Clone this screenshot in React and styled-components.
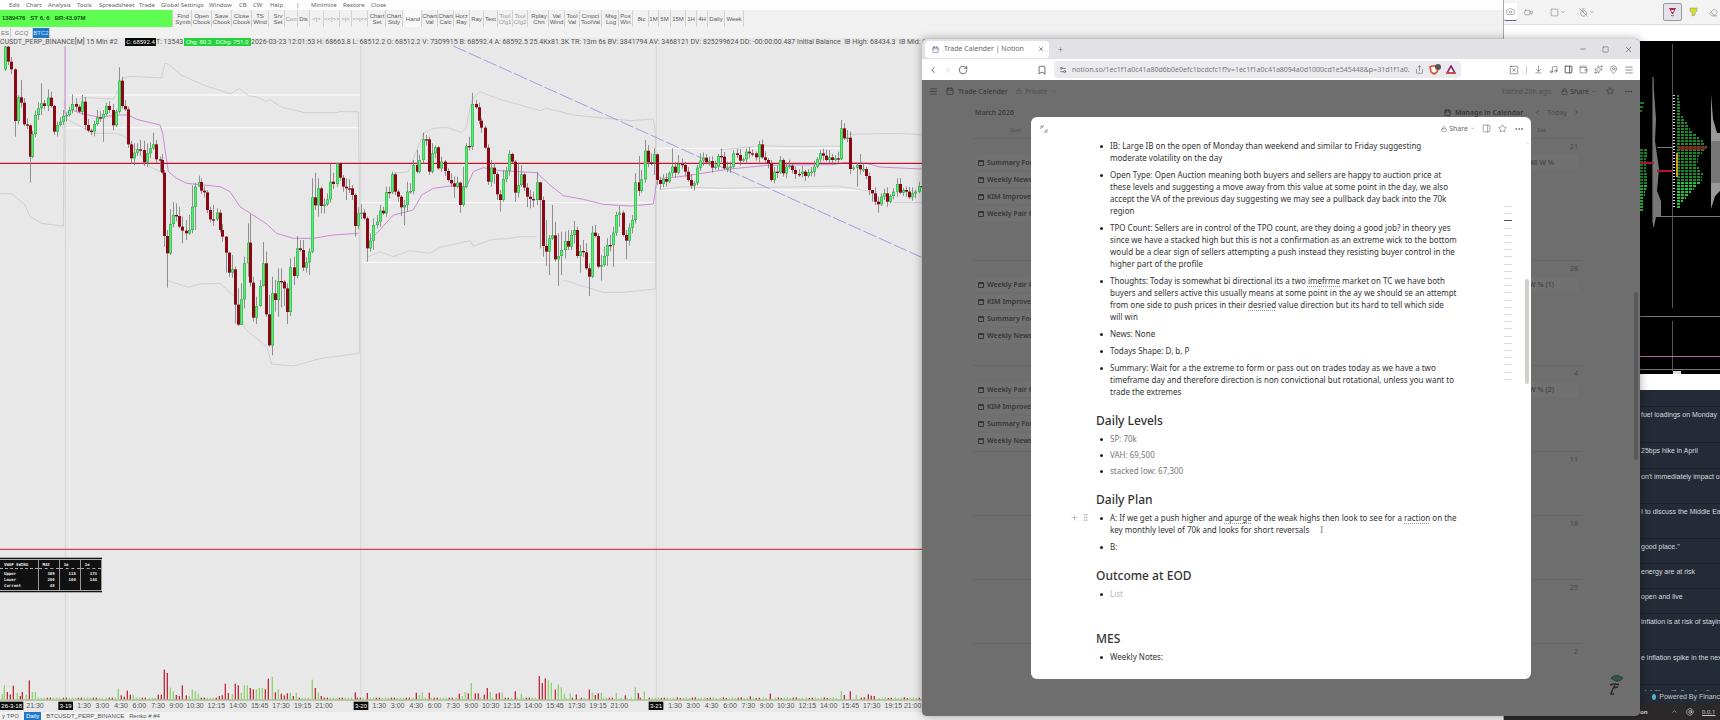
import React from "react";
import styled, { createGlobalStyle } from "styled-components";
import {
  ArrowDownToLine,
  Bookmark,
  Calendar,
  Camera,
  ChevronDown,
  ChevronLeft,
  ChevronRight,
  ChevronUp,
  Ellipsis,
  Eraser,
  Lock,
  Menu,
  Music,
  PanelRight,
  Plus,
  RotateCw,
  Settings2,
  Share,
  Sparkles,
  Square,
  SquareX,
  Star,
  TimerOff,
  Video,
  Wallet,
  X,
  Minus,
  MapPin,
  AtSign,
  GripVertical,
} from "lucide-react";

const GlobalStyle = createGlobalStyle`
* { box-sizing: border-box; }
body {
  margin: 0;
  overflow: hidden;
  background: #e8e8e8;
  font-family: "Noto Sans", sans-serif;
}
button { font: inherit; color: inherit; background: none; border: 0; padding: 0; margin: 0; }
a { color: inherit; text-decoration: none; }
`;

/* ---------- data ---------- */

const MENU = [
  ["Edit", 17], ["Chart", 22], ["Analysis", 29], ["Tools", 22], ["Spreadsheet", 40],
  ["Trade", 22], ["Global Settings", 48], ["Window", 30], ["CB", 14], ["CW", 17],
  ["Help", 26], ["|", 15], ["Minimize", 32], ["Restore", 28], ["Close", 30],
];

// label, width, extra space in front
const TOOLS = [
  ["Find Symb", 17, 2], ["Open Cbook", 20], ["Save Cbook", 20], ["Close Cbook", 20], ["TS Wind", 17],
  ["Srv Set", 13, 3], ["Con", 13], ["Dis", 12], ["<|>", 14], ["<<|>>", 16], [">|<", 12], [">>|<<", 16],
  ["Chart Set", 17, 1], ["Chart Stdy", 17], ["Hand", 17, 2], ["Chart Val", 16], ["Chart Calc", 16],
  ["Horz Ray", 16], ["Ray", 14], ["Text", 14], ["Tool Cfg1", 15], ["Tool Cfg2", 15],
  ["Rplay Chrt", 19, 2], ["Val Wind", 16], ["Tool Val", 15], ["Cmpct ToolVal", 22],
  ["Msg Log", 15, 2], ["Pos Win", 14], ["8tc", 14, 2], ["1M", 10], ["5M", 12], ["15M", 15],
  ["1H", 11], ["4H", 11], ["Daily", 17], ["Week", 19],
];

// x, close, high, low: every candle opens at the close before it
const CANDLES = [
  [7, 208], [16, 140], [25, 185], [34, 208], [44, 363, 205, 410], [53, 292], [62, 308, 240], [71, 373], [81, 376], [90, 470, 373, 548],
  [97, 402], [104, 345], [113, 325], [122, 310, 250, 345], [132, 318], [145, 293, 268], [154, 318], [163, 395, 315, 405], [172, 375], [181, 365],
  [190, 348], [199, 345], [208, 330], [217, 312, 283], [227, 320], [236, 335], [247, 305, 285], [254, 375], [263, 392], [272, 394],
  [281, 372], [290, 352, 330], [299, 355], [308, 342, 330, 425], [317, 318], [326, 330], [338, 376], [347, 335], [357, 242, 202, 340], [365, 318, 230, 325],
  [374, 328], [383, 433, 320], [392, 475], [401, 458, 430, 496], [410, 448], [420, 450, 420], [431, 487, 422, 498], [440, 460, 430, 500], [450, 445], [460, 433, 398],
  [467, 478, 420], [480, 480, 470, 515], [485, 518], [493, 708, 510, 740], [502, 760, 690, 863], [511, 672, 628, 765], [520, 645, 607], [529, 648, 610], [538, 680, 620], [547, 692, 650, 730],
  [557, 700, 660, 720], [566, 690, 645], [575, 620, 556, 700], [584, 560, 548, 690], [597, 546, 527, 560], [604, 572, 535], [612, 577, 560], [621, 630, 570, 640], [630, 658, 620], [640, 658, 615, 678],
  [652, 638, 625], [659, 690, 628, 698], [667, 710], [677, 758, 708, 818], [686, 818, 755, 830], [695, 808, 765], [704, 914, 800, 970], [713, 974, 865, 978], [722, 898, 850, 975], [733, 790, 770, 925],
  [743, 728, 670, 830], [750, 848, 643, 860], [760, 953, 830, 965], [769, 918, 890, 972], [779, 858, 840, 920], [790, 790, 726, 860], [798, 943, 755, 950], [808, 1036, 885, 1040], [816, 880, 830, 1066], [825, 900, 840, 935],
  [834, 843, 805, 950], [843, 845, 805, 922], [852, 865, 840, 918], [862, 936, 850, 972], [871, 802, 775, 948], [881, 828, 770, 855], [890, 745, 708, 835], [900, 750, 720], [909, 803, 720], [918, 787, 772],
  [927, 755, 745, 825], [936, 592, 535, 760], [945, 616, 518, 630], [955, 565, 535, 650], [963, 618, 560, 640], [972, 613, 595, 640], [982, 598, 580], [991, 545, 490], [1000, 552, 518], [1012, 490, 488, 560],
  [1021, 533, 488], [1030, 560, 525], [1038, 565, 535, 600], [1047, 565, 538], [1056, 585], [1065, 678, 580, 710], [1074, 640], [1084, 638, 613], [1093, 655], [1102, 745, 650, 785],
  [1111, 722, 700, 755], [1120, 675, 655, 750], [1130, 665, 645], [1139, 632, 615], [1148, 640, 620], [1158, 576, 560], [1167, 577, 560], [1177, 523, 515], [1185, 575, 518], [1194, 590],
  [1203, 622, 585, 648], [1212, 615, 600, 675], [1222, 575, 545, 635], [1231, 573, 550], [1240, 495, 480], [1250, 515, 450, 520], [1258, 480, 465], [1268, 418, 398, 490], [1277, 418, 405], [1286, 515, 410, 525],
  [1296, 460, 430, 520], [1305, 442], [1315, 505, 438], [1324, 485, 470], [1334, 513, 480], [1343, 540, 505], [1352, 550, 520], [1361, 560, 530, 593], [1370, 548], [1380, 615, 545, 638],
  [1389, 560, 500, 620], [1398, 438, 430, 565], [1407, 440, 410], [1417, 312, 278, 450], [1427, 322, 300], [1436, 362], [1444, 383, 355], [1454, 443], [1463, 545], [1472, 503, 480, 560],
  [1481, 522, 490, 552], [1490, 583, 515, 600], [1499, 600, 570, 635], [1508, 537, 510, 605], [1517, 512, 500], [1527, 462, 450], [1536, 485, 458], [1545, 578, 480, 605], [1554, 555, 490], [1564, 523, 495],
  [1573, 563, 520], [1582, 590, 550, 622], [1591, 597, 570, 625], [1600, 600, 575, 622], [1611, 547, 515], [1620, 600, 545, 745], [1629, 738, 590, 770], [1638, 755, 660, 798], [1647, 715, 705, 825], [1656, 706, 615, 720],
  [1665, 778, 665, 785], [1675, 768, 700, 858], [1684, 750, 695, 825], [1695, 723, 695, 775], [1704, 740, 690, 750], [1713, 705, 690], [1722, 690, 663, 730], [1731, 768, 680, 775], [1740, 753, 735, 818], [1749, 757, 720],
  [1757, 805, 730], [1766, 830, 790, 888], [1776, 698, 678, 835], [1786, 708, 675], [1795, 800, 700, 805], [1804, 795, 765, 842], [1813, 768, 740], [1822, 735, 715, 798], [1831, 735, 705], [1840, 698, 680, 800],
  [1849, 645, 635], [1858, 638, 618, 680], [1868, 705, 632], [1877, 722, 690, 778], [1886, 683, 670], [1896, 660, 645, 700], [1905, 547, 520], [1916, 573, 468], [1924, 538, 510], [1934, 452, 420],
  [1943, 487, 435], [1952, 488, 460], [1962, 463, 445, 525], [1970, 540, 460], [1980, 552, 530, 568], [1989, 537], [1998, 545, 520], [2007, 520], [2016, 500, 445], [2025, 518],
  [2035, 492, 465], [2045, 495, 475], [2054, 515], [2063, 540], [2072, 557], [2081, 550], [2090, 503, 495], [2099, 482, 460], [2108, 473, 458], [2118, 487, 462],
  [2127, 483, 470], [2136, 503], [2145, 500], [2154, 468], [2163, 470, 445], [2173, 505], [2182, 503], [2191, 500, 485], [2200, 460], [2210, 465],
  [2220, 482], [2229, 478], [2238, 455], [2247, 460], [2256, 460, 448], [2267, 472], [2276, 433], [2285, 472], [2295, 480], [2304, 490],
  [2313, 540], [2322, 515], [2331, 517], [2341, 480, 468], [2350, 520, 475], [2359, 500], [2368, 497], [2377, 510], [2386, 522], [2396, 522],
  [2405, 515], [2415, 528], [2424, 517], [2433, 515], [2442, 500], [2451, 478], [2460, 460], [2469, 467], [2478, 480], [2487, 472, 450],
  [2496, 480], [2505, 475, 465], [2514, 478, 455], [2523, 385, 360, 480], [2533, 415, 370], [2541, 413, 390], [2551, 507], [2560, 503], [2570, 495, 488, 560], [2580, 508, 462],
  [2589, 507], [2598, 528], [2606, 570], [2615, 580, 570, 605], [2624, 605], [2634, 613, 590, 638], [2643, 590], [2652, 580], [2662, 605], [2671, 588],
  [2680, 575], [2690, 552, 535], [2700, 578], [2709, 570], [2718, 575], [2728, 592], [2737, 580], [2746, 575], [2756, 558, 545], [2765, 560, 540],
];

// volume peaks by x, height and side
const VOLUME = [
  [7, 15, 1], [13, 42, 1], [22, 22, 0], [31, 15, 0], [40, 41, 0], [50, 20, 1], [59, 10, 0], [67, 22, 0], [77, 14, 1], [86, 57, 0], [95, 22, 1], [105, 22, 1],
  [354, 32, 1], [363, 12, 0], [372, 8, 0], [381, 26, 0], [391, 14, 0], [400, 14, 1], [474, 14, 0], [483, 14, 0], [492, 89, 0], [501, 79, 0], [511, 35, 1], [520, 24, 1],
  [529, 13, 0], [538, 10, 0], [547, 42, 0], [557, 12, 0], [566, 10, 1], [575, 29, 1], [584, 24, 1], [593, 17, 1], [658, 10, 0], [667, 12, 0], [676, 47, 0], [685, 19, 0], [695, 16, 1],
  [704, 47, 0], [713, 42, 0], [722, 20, 1], [732, 42, 1], [741, 42, 1], [750, 34, 0], [760, 30, 0], [769, 30, 1], [778, 34, 1], [787, 34, 1], [796, 30, 0], [805, 62, 0], [815, 68, 1],
  [824, 21, 0], [833, 30, 1], [842, 17, 0], [852, 12, 0], [861, 18, 0], [871, 20, 1], [880, 10, 0], [889, 20, 1], [935, 59, 1], [944, 34, 0], [954, 21, 1], [963, 10, 0], [1064, 21, 0], [1101, 19, 0],
  [1249, 20, 0], [1258, 13, 1], [1267, 21, 1], [1286, 20, 0], [1378, 17, 0], [1387, 10, 1], [1396, 22, 1], [1405, 18, 0], [1414, 49, 1], [1424, 18, 0], [1433, 18, 0], [1452, 14, 0], [1461, 34, 0], [1470, 22, 1],
  [1489, 17, 0], [1498, 20, 0], [1507, 20, 1], [1544, 24, 0], [1563, 17, 1], [1618, 70, 0], [1627, 49, 0], [1636, 63, 0], [1645, 57, 1], [1654, 50, 1], [1664, 29, 0], [1673, 45, 1], [1682, 36, 1], [1691, 17, 1],
  [1710, 17, 1], [1729, 15, 0], [1766, 29, 0], [1775, 20, 1], [1784, 13, 0], [1793, 18, 0], [1802, 20, 1], [1849, 19, 1], [1876, 12, 0], [1904, 36, 1], [1913, 19, 0], [1932, 23, 1],
  [2251, 9, 0], [2310, 17, 0], [2522, 25, 1], [2531, 13, 0], [2549, 24, 0], [2568, 12, 1], [2605, 15, 0], [2614, 11, 0], [2623, 10, 0],
];

const TIMES = [
  [105, "21:30"], [252, "1:30"], [307, "3:00"], [363, "4:30"], [418, "6:00"], [474, "7:30"], [529, "9:00"], [585, "10:30"],
  [649, "12:15"], [714, "14:00"], [779, "15:45"], [843, "17:30"], [908, "19:15"], [972, "21:00"], [1138, "1:30"], [1193, "3:00"],
  [1249, "4:30"], [1304, "6:00"], [1359, "7:30"], [1414, "9:00"], [1472, "10:30"], [1536, "12:15"], [1600, "14:00"], [1665, "15:45"],
  [1730, "17:30"], [1794, "19:15"], [1858, "21:00"], [2025, "1:30"], [2079, "3:00"], [2135, "4:30"], [2190, "6:00"], [2245, "7:30"],
  [2300, "9:00"], [2357, "10:30"], [2422, "12:15"], [2486, "14:00"], [2551, "15:45"], [2615, "17:30"], [2680, "19:15"], [2738, "21:00"],
];
const DAYS = [[35, "26-3-18", 70], [197, "3-19", 44], [1083, "3-20", 44], [1968, "3-21", 44]];

// y, width of the bid/ask profile
const PROFILE = [[54, 2], [72, 4], [90, 15], [100, 27], [106, 30], [114, 22], [124, 20], [132, 26], [140, 24], [150, 14], [160, 5], [168, 2]];

const WEEKS = [
  { h: 122, day: "21", tag: "48 W %", items: ["Summary For", "Weekly News", "KIM Improvement", "Weekly Pair Outlook"] },
  { h: 105, day: "28", tag: "W % (1)", items: ["Weekly Pair Outlook", "KIM Improvement", "Summary For", "Weekly News"] },
  { h: 86, day: "4", tag: "W % (2)", items: ["Weekly Pair Outlook", "KIM Improvement", "Summary For", "Weekly News"] },
  { h: 64, day: "11" },
  { h: 64, day: "18" },
  { h: 64, day: "25" },
  { h: 64, day: "2" },
];

const NEWS = [
  ["fuel loadings on Monday", 36, 16],
  ["25bps hike in April", 26],
  ["on't immediately impact o", 35],
  ["I to discuss the Middle Eas", 35],
  ["good place.\"", 25],
  ["energy are at risk", 25],
  ["open and live", 25],
  ["inflation is at risk of stayin", 36],
  ["e inflation spike in the nex", 35],
  ["stability with fiscal policy", 25],
];

/* ---------- chart window ---------- */

const Desktop = styled.div`
position: relative;
display: grid;
grid-template: minmax(0, 1fr) / minmax(0, 1fr) 216px;
height: 100vh;
overflow: hidden;
`;

const ChartWindow = styled.section`
position: relative;
display: flex;
flex-direction: column;
min-width: 0;
overflow: hidden;
background: #e8e8e8;
border-right: 1px solid #a8a8a8;
font-family: "Liberation Sans", sans-serif;
color: #666;
`;

const MenuBar = styled.nav`
display: flex;
flex: none;
height: 10px;
padding-left: 9px;
background: #fdfdfd;
font: 6px/10px "Noto Sans", sans-serif;
white-space: nowrap;
`;

const MenuItem = styled.button`
width: ${(p) => p.$w}px;
text-align: left;
`;

const ToolBar = styled.div`
display: flex;
flex: none;
height: 17px;
background: #f1f1f1;
font-size: 6px;
line-height: 6px;
`;

const Status = styled.div`
flex: none;
width: 173px;
padding-left: 2px;
background: #5dfd51;
color: #15540f;
border-right: 1px solid #c9c9c9;
font: bold 6px/16px "Liberation Sans", sans-serif;
white-space: pre;
`;

const ToolButton = styled.button`
flex: none;
width: ${(p) => p.$w}px;
margin-left: ${(p) => p.$gap || 0}px;
border-right: 1px solid #d2d2d2;
text-align: center;
white-space: nowrap;
background: ${(p) => (p.$on ? "#fafafa" : "transparent")};
color: ${(p) => (p.$dim ? "#999" : "#5a5a5a")};
`;

const ChartTabs = styled.div`
display: flex;
flex: none;
height: 11px;
padding-top: 1px;
background: #f1f1f1;
font-size: 6px;
line-height: 10px;
`;

const ChartTab = styled.button`
width: ${(p) => p.$w}px;
border-right: 1px solid #ccc;
white-space: nowrap;
background: ${(p) => (p.$on ? "#1f77c8" : "transparent")};
color: ${(p) => (p.$on ? "#cfe6fb" : "#777")};
`;

const Quote = styled.div`
display: flex;
flex: none;
height: 8px;
font: 7px/8px Roboto, sans-serif;
color: #555;
white-space: pre;
`;

const QuotePart = styled.span`
flex: none;
width: ${(p) => p.$w}px;
`;

const Chip = styled(QuotePart)`
background: ${(p) => p.$bg};
color: #f2fff2;
font-size: 6px;
text-align: center;
`;

const Plot = styled.svg`
flex: none;
display: block;
width: 100%;
height: 666px;
`;

const ChartFooter = styled.div`
display: flex;
flex: none;
height: 8px;
gap: 3px;
background: #f1f1f1;
font-size: 6px;
line-height: 8px;
white-space: pre;
`;

const FooterTab = styled.button`
height: 8px;
padding: 0 2px;
background: ${(p) => (p.$on ? "#1f77c8" : "transparent")};
color: ${(p) => (p.$on ? "#fff" : "#555")};
`;

const Vwap = styled.table`
position: absolute;
left: 0;
top: 557px;
width: 102px;
height: 36px;
table-layout: fixed;
background: #111;
color: #eee;
border-collapse: collapse;
border-top: 3px double #aaa;
border-bottom: 3px double #aaa;
font: bold 4px/5px "DejaVu Sans Mono", monospace;
th, td { padding: 0 4px; text-align: right; border-right: 1px solid #999; white-space: nowrap; }
th { height: 10px; border-bottom: 1px dashed #aaa; text-align: left; }
th:first-child { width: 38px; }
td:first-child { text-align: left; }
tbody tr:first-child td { padding-top: 2px; }
tbody tr:last-child td { padding-bottom: 2px; }
`;

/* ---------- right column ---------- */

const SideColumn = styled.aside`
display: flex;
flex-direction: column;
min-width: 0;
min-height: 0;
background: #fff;
`;

const SnipBar = styled.div`
display: flex;
align-items: center;
flex: none;
height: 25px;
background: #f3f3f3;
border-bottom: 1px solid #ddd;
color: #777;
`;

const SnipButton = styled.button`
display: flex;
flex: none;
align-items: center;
justify-content: center;
gap: 1px;
height: 18px;
width: ${(p) => p.$w}px;
margin-left: ${(p) => p.$gap || 0}px;
border: ${(p) => (p.$boxed ? "1px solid #999" : "0")};
border-bottom: ${(p) => (p.$on ? "1px solid #5b5ba8" : "")};
border-radius: 2px;
background: ${(p) => (p.$boxed ? "#e4e2ea" : p.$on ? "#fff" : "transparent")};
`;

const Behind = styled.div`
display: flex;
flex-direction: column;
flex: 1;
min-height: 0;
padding: 16px 0 0 136px;
`;

const Profile = styled.svg`
flex: none;
display: block;
width: 80px;
height: 333px;
background: #000;
`;

const NewsFeed = styled.div`
display: flex;
flex-direction: column;
flex: 1;
min-height: 0;
margin-top: 16px;
overflow: hidden;
background: #242b36;
color: #d5d9de;
font: 7px/12px "Liberation Sans", sans-serif;
white-space: nowrap;
`;

const NewsItem = styled.a`
display: block;
flex: none;
height: ${(p) => p.$h}px;
margin-top: ${(p) => p.$top || 0}px;
padding: 2px 0 0 1px;
border-top: 1px solid #1b212b;
`;

const Powered = styled.a`
display: flex;
align-items: center;
gap: 3px;
flex: none;
height: 12px;
padding-left: 12px;
background: #242b36;
color: #c4c9d0;
font: 7px/12px "Liberation Sans", sans-serif;
white-space: nowrap;
&::before { content: ""; width: 6px; height: 6px; border-radius: 50%; background: #4bb4bd; }
`;

const TaskBar = styled.div`
display: flex;
align-items: center;
gap: 8px;
flex: none;
height: 17px;
padding-left: 136px;
background: #2b2829;
color: #ccc;
font-size: 6px;
b { width: 23px; }
`;

/* ---------- browser ---------- */

const Browser = styled.section`
position: absolute;
left: 922px;
right: 80px;
top: 39px;
bottom: 4px;
display: flex;
flex-direction: column;
border-radius: 5px;
overflow: hidden;
background: #6e6e6e;
box-shadow: 0 0 10px rgba(0, 0, 0, 0.35);
`;

const TabStrip = styled.div`
display: flex;
align-items: center;
flex: none;
height: 20px;
padding: 0 7px 0 3px;
gap: 8px;
background: #e1e1e6;
color: #666;
`;

const Tab = styled.div`
display: flex;
align-items: center;
gap: 5px;
width: 124px;
height: 17px;
padding: 0 5px 0 7px;
border-radius: 4px;
background: #fff;
font-size: 7px;
line-height: 10px;
span { flex: 1; }
`;

const WindowButtons = styled.div`
display: flex;
gap: 15px;
margin-left: auto;
`;

const IconButton = styled.button`
display: flex;
align-items: center;
justify-content: center;
`;

const BookmarkButton = styled(IconButton)`
margin-left: 69px;
`;

const AddressRow = styled.div`
display: flex;
align-items: center;
flex: none;
height: 21px;
padding: 0 6px;
background: #fff;
color: #555;
`;

const NavGroup = styled.div`
display: flex;
align-items: center;
gap: ${(p) => p.$gap}px;
`;

const UrlBox = styled.label`
display: flex;
align-items: center;
gap: 5px;
width: 407px;
height: 17px;
margin-left: 7px;
padding: 0 5px;
border-radius: 4px;
background: #ebebef;
`;

const UrlInput = styled.input`
flex: 1;
min-width: 0;
padding: 0;
border: 0;
background: none;
color: #777;
font: 7px/12px "Noto Sans", sans-serif;
`;

const ToolIcons = styled.div`
display: flex;
align-items: center;
gap: 6px;
margin-left: auto;
`;

const ToolRule = styled.i`
width: 1px;
height: 8px;
margin: 0 1px;
background: #ccc;
`;

const Page = styled.main`
position: relative;
flex: 1;
min-height: 0;
overflow: hidden;
background: #6e6e6e;
color: #363636;
font-size: 8px;
`;

const PageBar = styled.div`
display: flex;
align-items: center;
justify-content: space-between;
height: 22px;
padding: 0 7px;
span { font-size: 7px; }
`;

const Faint = styled.span`
display: flex;
align-items: center;
gap: 3px;
color: #505050;
font-size: 7px;
`;

const CalendarHead = styled.div`
display: flex;
align-items: center;
justify-content: space-between;
height: 20px;
padding: 0 60px 0 53px;
font-size: 7px;
font-weight: 500;
b { font-weight: 600; }
`;

const DayNames = styled.div`
display: flex;
justify-content: space-between;
height: 16px;
padding: 0 94px 0 88px;
color: #4c4c4c;
font-size: 6px;
line-height: 16px;
`;

const Week = styled.div`
display: flex;
justify-content: space-between;
height: ${(p) => p.$h}px;
margin: 0 58px 0 50px;
border-top: 1px solid #676767;
`;

const CardStack = styled.div`
display: flex;
flex-direction: column;
gap: 2px;
padding: 16px 0 0 4px;
`;

const Card = styled.a`
display: flex;
align-items: center;
justify-content: ${(p) => (p.$end ? "flex-end" : "flex-start")};
gap: 3px;
width: ${(p) => p.$w}px;
height: 15px;
padding: 0 ${(p) => (p.$end ? 24 : 0)}px 0 2px;
border-radius: 2px;
background: #717171;
white-space: nowrap;
font-size: 7px;
font-weight: 600;
`;

const DayColumn = styled.div`
display: flex;
flex-direction: column;
align-items: flex-end;
padding: 1px 4px 0 0;
gap: 1px;
color: #484848;
font-size: 7px;
line-height: 14px;
`;

const PageThumb = styled.div`
position: absolute;
right: 2px;
top: 212px;
width: 4px;
height: 168px;
border-radius: 2px;
background: #5a5a5a;
`;

const Mascot = styled.svg`
position: absolute;
right: 16px;
bottom: 20px;
width: 16px;
height: 22px;
`;

/* ---------- note dialog ---------- */

const Note = styled.article`
position: absolute;
left: 109px;
right: 109px;
top: 37px;
bottom: 37px;
display: flex;
flex-direction: column;
border-radius: 6px;
background: #fff;
color: #333;
overflow: hidden;
`;

const NoteHead = styled.header`
display: flex;
align-items: center;
justify-content: space-between;
flex: none;
height: 23px;
padding: 0 7px 0 9px;
color: #666;
`;

const ShareButton = styled.button`
display: flex;
align-items: center;
gap: 2px;
font-size: 7px;
`;

const NoteBody = styled.div`
display: flex;
justify-content: space-between;
flex: 1;
min-height: 0;
`;

const Doc = styled.div`
padding-left: 65px;
font-size: 8px;
line-height: 12px;
white-space: nowrap;
`;

const Heading = styled.h2`
margin: ${(p) => (p.$far ? 31 : 15)}px 0 4px;
font-size: 12px;
line-height: 16px;
font-weight: 500;
`;

const List = styled.ul`
margin: 0;
padding: 0 0 0 14px;
list-style: none;
display: grid;
gap: ${(p) => (p.$tight ? 4 : 5)}px;
`;

const Item = styled.li`
position: relative;
color: ${(p) => p.$color || "inherit"};
u { text-decoration: underline dotted #999; text-underline-offset: 2px; }
&::before {
  content: "";
  position: absolute;
  left: -10px;
  top: 5px;
  width: 3px;
  height: 3px;
  border-radius: 50%;
  background: #222;
}
`;

const Handles = styled.div`
position: absolute;
left: -40px;
top: 1px;
display: flex;
gap: 2px;
color: #999;
`;

const Outline = styled.div`
display: flex;
flex-direction: column;
justify-content: space-between;
width: 8px;
height: 174px;
margin: 66px 11px 0 auto;
`;

const OutlineMark = styled.i`
height: 1px;
background: ${(p) => (p.$on ? "#555" : "#ddd")};
`;

const Gutter = styled.div`
display: flex;
flex-direction: column;
align-items: center;
justify-content: space-between;
width: 8px;
padding: 1px 0;
color: #aaa;
`;

const NoteThumb = styled.div`
width: 4px;
height: 105px;
margin: 133px 0 auto;
border-radius: 2px;
background: #cfcfcc;
`;

const Caret = styled.span`
position: absolute;
left: 289px;
top: 407px;
color: #888;
font: 10px/12px "Liberation Serif", serif;
`;

/* ---------- drawings ---------- */

function Candles() {
  return CANDLES.slice(1).map(([x, close, high, low], i) => {
    const open = CANDLES[i][1];
    const up = close < open;
    const left = Math.round(x / 3) * 3 - 3;
    const top = Math.min(open, close);
    const bottom = Math.max(open, close, top + 4);
    return (
      <g key={x}>
        <path d={`M${left + 4.5} ${high || top - 6 - (i % 4) * 4}V${low || bottom + 5 + (i % 3) * 5}`} stroke="#777" strokeWidth="2.4" />
        <rect x={left} y={top} width="9" height={bottom - top} fill={up ? "#2fb54a" : "#8c0714"} />
        {up && <rect x={left + 2} y={top + 2} width="5" height={Math.max(bottom - top - 4, 1)} fill="#5fec7c" />}
      </g>
    );
  });
}

function Volume() {
  const small = [];
  for (let x = 114; x < 2765; x += 9.21) {
    if (!VOLUME.some(([v]) => Math.abs(v - x) < 6)) {
      const n = small.length;
      small.push([x, x > 1960 ? 4 + (n % 3) : 5 + ((n * 7) % 7), n % 5 < 3 ? 1 : 0]);
    }
  }
  return [...VOLUME, ...small].map(([x, h, up]) => (
    <rect key={x} x={Math.round(x / 3) * 3 - 1} y={2098 - h} width="4" height={h} fill={up ? "#8fd46c" : "#c02a3e"} />
  ));
}

function PriceChart() {
  return (
    <Plot viewBox="0 138 4512 1998" preserveAspectRatio="xMinYMin slice">
      <g stroke="#d6d6d6" strokeWidth="3">
        <path d="M196 138V2098M1082 138V2098M1969 138V2098" />
      </g>
      <path d="M210 740V2098" stroke="#f0f0f0" strokeWidth="3" />
      <path d="M205 285H1080M197 383H1080M1085 608H1968M1085 787H1968M1970 445H2520M1970 570H2600" stroke="#f8f8f8" strokeWidth="4" />
      <g fill="none" stroke="#cfcfcf" strokeWidth="3">
        <path d="M365 236L390 229L485 234L494 190L505 192L545 226L610 255L692 282L718 265L745 287L770 291L797 304L810 299L845 322L915 338H1010L1020 335H1075L1078 560V1060L960 1076L880 1098L815 1092L800 1040L750 1000L735 985L704 890L660 850L600 852L565 862L505 842" />
        <path d="M197 355L245 292L340 297L355 270M197 355L280 400H350L375 410L450 500L480 515" />
        <path d="M0 581H35L75 615L90 650L125 670L190 678L193 300" />
        <path d="M1180 520L1225 515L1270 400L1300 385L1340 382L1385 398L1398 385L1415 300L1440 275L1500 298L1620 332L1640 325L1720 345L1890 362L1960 357L1966 400V867L1870 877H1810L1760 862L1690 840M1105 770L1140 755L1180 770L1230 752L1290 760L1320 742L1410 722L1420 738L1480 718L1520 716L1560 710H1610" />
        <path d="M1975 570L2050 560L2160 565L2510 558L2600 572M2160 450L2280 437L2400 440L2520 438L2535 403L2700 400L2765 404M2680 608H2765" />
      </g>
      <g fill="none" stroke="#cf8ad6" strokeWidth="3">
        <path d="M195 138V340M197 340L215 330L250 342L300 352L350 345L385 345L410 358L480 375L488 400L495 450L505 515L530 535L560 550L620 556L660 560L690 575L720 620L800 672L830 700L880 715H940L1000 705L1075 700" />
        <path d="M1110 720L1130 700L1180 645L1240 630L1265 585L1300 565L1350 558L1400 560L1420 515L1450 503L1500 512L1610 518L1650 555L1690 587L1750 598L1810 613L1890 618L1960 612L1970 545" />
        <path d="M1985 535L2040 530L2080 524L2170 510L2200 506L2300 496L2500 494L2530 488L2600 490L2640 501L2765 507" />
      </g>
      <path d="M0 490H4512" stroke="#c4122f" strokeWidth="4" />
      <path d="M0 1648H4512" stroke="#cd4058" strokeWidth="4" />
      <path d="M1360 138L2765 772" stroke="#9aa0e4" strokeWidth="3" strokeDasharray="42 8" />
      <Candles />
      <path d="M0 2100H2766" stroke="#87a870" strokeWidth="3" />
      <Volume />
      <g fontSize="21" textAnchor="middle" fill="#555" fontFamily="Liberation Sans, Arial, sans-serif">
        {TIMES.map(([x, t]) => <text key={x} x={x} y="2125">{t}</text>)}
        {DAYS.map(([x, t, w]) => (
          <g key={t}>
            <rect x={x - w / 2} y="2105" width={w} height="25" fill="#0a0a0a" />
            <text x={x} y="2125" fill="#fff" fontSize="18">{t}</text>
          </g>
        ))}
      </g>
    </Plot>
  );
}

function profileWidth(y) {
  const i = PROFILE.findIndex(([py]) => py > y);
  const [y0, w0] = PROFILE[i - 1];
  const [y1, w1] = PROFILE[i];
  return Math.round(w0 + ((w1 - w0) * (y - y0)) / (y1 - y0)) + ((y * 7) % 3);
}

function MarketProfile() {
  const rows = [];
  for (let y = 54; y < 168; y += 3) rows.push(y);
  return (
    <Profile viewBox="0 0 80 333">
      <path d="M13 36V182" stroke="#888" />
      <path d="M13 36L14 50L16 78L15 100L19 128L17 150L21 160V176H16L14 186H13Z" fill="#777" />
      <path d="M71 53L73 78L77 92H80V150L75 155L71 168Z" fill="#9a9a9a" />
      <rect x="71" y="100" width="9" height="42" fill="#777" />
      <path d="M32.5 3V267M32.5 280V330" stroke="#555" />
      <path d="M17 106.5H34M20 175.5H80M0 275.5H80M0 328.5H80" stroke="#777" />
      <path d="M0 315.5H80" stroke="#b565a5" />
      <path d="M34 54V168" stroke="#ddd" strokeWidth="2" strokeDasharray="1 2" />
      {rows.map((y) => (
        <g key={y} stroke={y > 138 ? "#1fc53c" : "#188a2a"} strokeWidth="2" strokeDasharray="3 1">
          <path d={`M37 ${y + 1}h${profileWidth(y)}`} />
          {y > 102 && <path d={`M0 ${y + 4}h${2 + Math.round(profileWidth(y) / 5)}`} />}
        </g>
      ))}
      <path d="M37 112V136" stroke="#d19a21" strokeWidth="2" />
      <path d="M38 107H66" stroke="#8c1b20" strokeWidth="3" />
      <path d="M0 122H14M17 130H32" stroke="#b3162b" strokeWidth="2" />
      <path d="M0 62h4M0 66h3M0 70h2" stroke="#1a8a2c" strokeWidth="2" />
      <rect x="33" y="330" width="8" height="3" fill="#ddd" />
    </Profile>
  );
}

const CardIcon = () => (
  <svg width="6" height="6" viewBox="0 0 6 6" fill="none" stroke="#363636">
    <path d="M.5.5h5v5h-5zM.5 1.5h5" />
  </svg>
);

const ResizeIcon = () => (
  <svg width="8" height="8" viewBox="0 0 8 8" fill="none" stroke="#999">
    <path d="M1 4V1h3M1 1l2 2M7 4v3H4M7 7L5 5" />
  </svg>
);

/* ---------- app ---------- */

export default function App() {
  return (
    <>
      <GlobalStyle />
      <Desktop>
        <ChartWindow>
          <MenuBar>
            {MENU.map(([label, w]) => <MenuItem key={label} $w={w}>{label}</MenuItem>)}
          </MenuBar>
          <ToolBar>
            <Status>{"1389476   ST 6, 6   BR:43.97M"}</Status>
            {TOOLS.map(([label, w, gap]) => (
              <ToolButton key={label} $w={w} $gap={gap} $on={label === "Hand"} $dim={/Cfg|<|>|Con/.test(label)}>
                {label.split(" ").map((word) => <div key={word}>{word}</div>)}
              </ToolButton>
            ))}
          </ToolBar>
          <ChartTabs>
            <ChartTab $w={11}>ES</ChartTab>
            <ChartTab $w={22}>GCQ</ChartTab>
            <ChartTab $w={17} $on>BTC2</ChartTab>
          </ChartTabs>
          <Quote>
            <QuotePart $w={125}>CUSDT_PERP_BINANCE[M] 15 Min #2</QuotePart>
            <Chip $w={31} $bg="#080808">C: 68592.4</Chip>
            <QuotePart $w={28}>T: 13543</QuotePart>
            <Chip $w={29} $bg="#22d43c">Chg: 80.2</Chip>
            <Chip $w={38} $bg="#22d43c">DChg: 751.0</Chip>
            <span>2026-03-23 12:01:53 H: 68663.8 L: 68512.2 O: 68512.2 V: 7309915 B: 68592.4 A: 68592.5 25.4Kx81.3K TR: 13m 6s BV: 3841794 AV: 3468121 DV: 825299624 DD: -00:00:00.487 Initial Balance  IB High: 68434.3  IB Mid: 67917.2  IB Low</span>
          </Quote>
          <PriceChart />
          <ChartFooter>
            <FooterTab>y TPO</FooterTab>
            <FooterTab $on>Daily</FooterTab>
            <FooterTab>{"BTCUSDT_PERP_BINANCE   Renko # #4"}</FooterTab>
          </ChartFooter>
          <Vwap>
            <thead>
              <tr><th>VWAP SWING</th><th>MAX</th><th>1σ</th><th>2σ</th></tr>
            </thead>
            <tbody>
              <tr><td>Upper</td><td>309</td><td>118</td><td>173</td></tr>
              <tr><td>Lower</td><td>200</td><td>100</td><td>144</td></tr>
              <tr><td>Current</td><td>48</td><td /><td /></tr>
            </tbody>
          </Vwap>
        </ChartWindow>

        <SideColumn>
          <SnipBar>
            <SnipButton $w={13} $on aria-label="Snapshot"><Camera size={9} strokeWidth={1.5} /></SnipButton>
            <SnipButton $w={20} $gap={1} aria-label="Record"><Video size={9} strokeWidth={1.5} /></SnipButton>
            <SnipButton $w={18} $gap={11} aria-label="Shape"><Square size={9} strokeWidth={1.5} /><ChevronDown size={6} /></SnipButton>
            <SnipButton $w={18} $gap={11} aria-label="Delay"><TimerOff size={9} strokeWidth={1.5} /><ChevronDown size={6} /></SnipButton>
            <SnipButton $w={19} $gap={67} $boxed aria-label="Pen">
              <svg width="9" height="11" viewBox="0 0 9 11">
                <path d="M1 1h7L5 7H4Z" fill="#b02a48" />
                <path d="M3 3h3L5 5H4Z" fill="#fff" />
                <path d="M3 8l1 1 2-1" stroke="#777" fill="none" />
              </svg>
            </SnipButton>
            <SnipButton $w={19} $gap={2} aria-label="Highlighter">
              <svg width="9" height="10" viewBox="0 0 9 10">
                <path d="M1 1h7v3L6 6v2L3 9V6L1 4Z" fill="#d4dd26" stroke="#888" strokeWidth=".5" />
              </svg>
            </SnipButton>
            <SnipButton $w={19} $gap={1} aria-label="Eraser"><Eraser size={9} strokeWidth={1.5} /></SnipButton>
          </SnipBar>
          <Behind>
            <MarketProfile />
            <NewsFeed>
              {NEWS.map(([text, h, top]) => <NewsItem key={text} href="#" $h={h} $top={top}>{text}</NewsItem>)}
            </NewsFeed>
            <Powered href="#">Powered By Financ</Powered>
          </Behind>
          <TaskBar>
            <b>on</b>
            <ChevronUp size={7} />
            <AtSign size={8} />
            <u>0.0.1</u>
          </TaskBar>
        </SideColumn>

        <Browser>
          <TabStrip>
            <Tab>
              <Calendar size={7} color="#6b4f8a" />
              <span>Trade Calender | Notion</span>
              <IconButton aria-label="Close tab"><X size={6} strokeWidth={3} /></IconButton>
            </Tab>
            <IconButton aria-label="New tab"><Plus size={7} strokeWidth={1.5} /></IconButton>
            <WindowButtons>
              <IconButton aria-label="Minimize"><Minus size={8} /></IconButton>
              <IconButton aria-label="Maximize"><Square size={7} /></IconButton>
              <IconButton aria-label="Close"><X size={9} /></IconButton>
            </WindowButtons>
          </TabStrip>
          <AddressRow>
            <NavGroup $gap={5}>
              <IconButton aria-label="Back"><ChevronLeft size={10} /></IconButton>
              <IconButton aria-label="Forward"><ChevronRight size={10} color="#ccc" /></IconButton>
              <IconButton aria-label="Reload"><RotateCw size={10} /></IconButton>
            </NavGroup>
            <BookmarkButton aria-label="Bookmark"><Bookmark size={10} /></BookmarkButton>
            <UrlBox>
              <Settings2 size={8} />
              <UrlInput aria-label="Address" readOnly value="notion.so/1ec1f1a0c41a80d6b0e0efc1bcdcfc1f?v=1ec1f1a0c41a8094a0d1000cd1e545448&p=31d1f1a0..." />
              <Share size={9} strokeWidth={1.5} />
              <svg width="12" height="11" viewBox="0 0 12 11">
                <path d="M1 3l2-1h3l3 2-1 4-3 2-3-2Z" fill="#fff" stroke="#d8502c" strokeWidth="1.6" />
                <circle cx="9" cy="3" r="3" fill="#555" />
              </svg>
              <svg width="10" height="9" viewBox="0 0 10 9">
                <path d="M5 1L9 8H1Z" fill="#fff" stroke="#8b2368" strokeWidth="1.6" />
                <path d="M1 8h8" stroke="#df4a2b" strokeWidth="1.4" />
              </svg>
            </UrlBox>
            <ToolIcons>
              <SquareX size={10} strokeWidth={1.5} />
              <ToolRule />
              <ArrowDownToLine size={9} strokeWidth={1.5} />
              <Music size={9} strokeWidth={1.5} />
              <PanelRight size={9} strokeWidth={2.5} />
              <Wallet size={9} strokeWidth={1.5} />
              <Sparkles size={9} strokeWidth={1.5} />
              <MapPin size={9} strokeWidth={1.5} />
              <Menu size={10} strokeWidth={1.5} />
            </ToolIcons>
          </AddressRow>

          <Page>
            <PageBar>
              <NavGroup $gap={8}>
                <Menu size={9} />
                <NavGroup $gap={4}><Calendar size={8} /><span>Trade Calender</span></NavGroup>
                <Faint><Lock size={6} /> Private <ChevronDown size={5} /></Faint>
              </NavGroup>
              <NavGroup $gap={10}>
                <Faint>Edited 20h ago</Faint>
                <ShareButton><Lock size={7} />Share <ChevronDown size={5} /></ShareButton>
                <Star size={8} />
                <Ellipsis size={9} />
              </NavGroup>
            </PageBar>
            <CalendarHead>
              <span>March 2026</span>
              <NavGroup $gap={11}>
                <NavGroup $gap={4}><Calendar size={7} strokeWidth={3} /><b>Manage in Calendar</b></NavGroup>
                <NavGroup $gap={6}><ChevronLeft size={7} /><Faint>Today</Faint><ChevronRight size={7} /></NavGroup>
              </NavGroup>
            </CalendarHead>
            <DayNames><span>Sun</span><span>Sat</span></DayNames>
            {WEEKS.map((week) => (
              <Week key={week.day} $h={week.h}>
                <CardStack>
                  {week.items?.map((item) => <Card key={item} href="#" $w={90}><CardIcon />{item}</Card>)}
                </CardStack>
                <DayColumn>
                  <span>{week.day}</span>
                  {week.tag && <Card href="#" $w={58} $end>{week.tag}</Card>}
                </DayColumn>
              </Week>
            ))}
            <PageThumb />
            <Mascot viewBox="0 0 16 22" fill="none">
              <path d="M3 4q5-5 12 0-5 5-9 2Z" fill="#31564c" stroke="#263c38" />
              <path d="M2 11q5-2 9 0M7 11q-3 5-4 9h3M5 14l5-1" stroke="#282828" strokeWidth="1.4" />
            </Mascot>

            <Note>
              <NoteHead>
                <IconButton aria-label="Resize"><ResizeIcon /></IconButton>
                <NavGroup $gap={7}>
                  <ShareButton><Lock size={6} />Share <ChevronDown size={5} /></ShareButton>
                  <PanelRight size={9} strokeWidth={1.5} />
                  <Star size={9} strokeWidth={1.5} />
                  <Ellipsis size={10} />
                </NavGroup>
              </NoteHead>
              <NoteBody>
                <Doc>
                  <List>
                    <Item>IB: Large IB on the open of Monday than weekend and similar to Friday suggesting<br />moderate volatility on the day</Item>
                    <Item>Open Type: Open Auction meaning both buyers and sellers are happy to auction price at<br />these levels and suggesting a move away from this value at some point in the day, we also<br />accept the VA of the previous day suggesting we may see a pullback day back into the 70k<br />region</Item>
                    <Item>TPO Count: Sellers are in control of the TPO count, are they doing a good job? in theory yes<br />since we have a stacked high but this is not a confirmation as an extreme wick to the bottom<br />would be a clear sign of sellers attempting a push instead they resisting buyer control in the<br />higher part of the profile</Item>
                    <Item>Thoughts: Today is somewhat bi directional its a two <u>imefrme</u> market on TC we have both<br />buyers and sellers active this usually means at some point in the ay we should se an attempt<br />from one side to push prices in their <u>desried</u> value direction but its hard to tell which side<br />will win</Item>
                    <Item>News: None</Item>
                    <Item>Todays Shape: D, b, P</Item>
                    <Item>Summary: Wait for a the extreme to form or pass out on trades today as we have a two<br />timeframe day and therefore direction is non convictional but rotational, unless you want to<br />trade the extremes</Item>
                  </List>
                  <Heading>Daily Levels</Heading>
                  <List $tight>
                    <Item $color="#777">SP: 70k</Item>
                    <Item $color="#777">VAH: 69,500</Item>
                    <Item $color="#777">stacked low: 67,300</Item>
                  </List>
                  <Heading>Daily Plan</Heading>
                  <List>
                    <Item>
                      <Handles><Plus size={9} strokeWidth={1.5} /><GripVertical size={9} strokeWidth={1.5} /></Handles>
                      A: If we get a push higher and <u>apurge</u> of the weak highs then look to see for a <u>raction</u> on the<br />key monthly level of 70k and looks for short reversals
                    </Item>
                    <Item>B:</Item>
                  </List>
                  <Heading>Outcome at EOD</Heading>
                  <List><Item $color="#bbb">List</Item></List>
                  <Heading $far>MES</Heading>
                  <List><Item>Weekly Notes:</Item></List>
                </Doc>
                <Outline>
                  {Array.from({ length: 25 }, (_, i) => <OutlineMark key={i} $on={i === 2} />)}
                </Outline>
                <Gutter>
                  <ChevronUp size={5} />
                  <NoteThumb />
                  <ChevronDown size={5} />
                </Gutter>
              </NoteBody>
              <Caret>I</Caret>
            </Note>
          </Page>
        </Browser>
      </Desktop>
    </>
  );
}
